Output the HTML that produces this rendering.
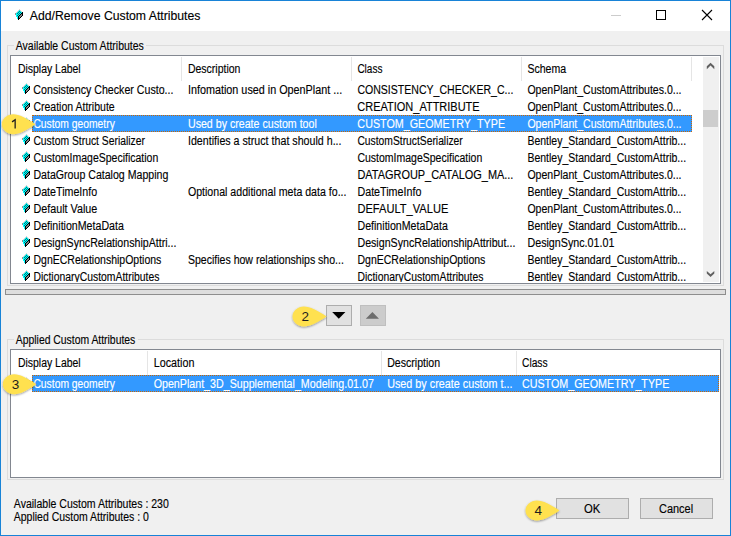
<!DOCTYPE html>
<html>
<head>
<meta charset="utf-8">
<title>Add/Remove Custom Attributes</title>
<style>
html,body{margin:0;padding:0;}
body{width:731px;height:536px;overflow:hidden;background:#f0f0f0;font-family:"Liberation Sans",sans-serif;position:relative;}
.abs,.t,.ic{position:absolute;}
.t{white-space:pre;font-size:12.5px;line-height:12.5px;transform-origin:0 0;-webkit-text-stroke:0.14px currentColor;}
#win{left:0;top:0;width:729px;height:534px;border:1px solid #1883d7;background:#f0f0f0;}
#title{left:1px;top:1px;width:729px;height:30px;background:#fff;}
.grp{border:1px solid #dcdcdc;}
.lbl{background:#f0f0f0;}
.lv{border:1px solid #828790;background:#fff;}
.hd{background:#e5e5e5;width:1px;}
.sel{background:#3399ff;}
.btn{border:1px solid #adadad;background:#e1e1e1;}
.btnd{border:1px solid #bfbfbf;background:#cccccc;}
.px{width:1px;height:1px;background:transparent;box-shadow:5px 1px 0 #dccfcf,4px 2px 0 #dccfcf,5px 2px 0 #00ffff,6px 2px 0 #dccfcf,3px 3px 0 #dccfcf,4px 3px 0 #00ffff,5px 3px 0 #007878,6px 3px 0 #00ffff,7px 3px 0 #dccfcf,2px 4px 0 #dccfcf,3px 4px 0 #00ffff,4px 4px 0 #007878,5px 4px 0 #00ffff,6px 4px 0 #007878,7px 4px 0 #00ffff,8px 4px 0 #000,1px 5px 0 #989090,2px 5px 0 #00ffff,3px 5px 0 #007878,4px 5px 0 #00ffff,5px 5px 0 #007878,6px 5px 0 #00ffff,7px 5px 0 #000,8px 5px 0 #000,1px 6px 0 #989090,2px 6px 0 #00ffff,3px 6px 0 #00ffff,4px 6px 0 #007878,5px 6px 0 #00ffff,6px 6px 0 #000,7px 6px 0 #808080,8px 6px 0 #000,2px 7px 0 #00ffff,3px 7px 0 #007878,4px 7px 0 #00ffff,5px 7px 0 #000,6px 7px 0 #808080,7px 7px 0 #808080,8px 7px 0 #000,2px 8px 0 #00ffff,3px 8px 0 #00ffff,4px 8px 0 #000,5px 8px 0 #808080,6px 8px 0 #808080,7px 8px 0 #000,3px 9px 0 #00ffff,4px 9px 0 #000,5px 9px 0 #808080,6px 9px 0 #000,3px 10px 0 #00ffff,4px 10px 0 #000,5px 10px 0 #000,4px 11px 0 #000;}
</style>
</head>
<body>
<div class="abs" id="win"></div>
<div class="abs" id="title"></div>

<!-- title bar controls -->
<svg class="abs" style="left:600px;top:0;width:130px;height:31px" viewBox="0 0 130 31">
  <rect x="11" y="15" width="10" height="1" fill="#cccccc"/>
  <rect x="56.5" y="10.5" width="9" height="9" fill="none" stroke="#000" stroke-width="1"/>
  <path d="M102 10 L112 20 M112 10 L102 20" stroke="#000" stroke-width="1.1" fill="none"/>
</svg>

<!-- group boxes -->
<div class="abs grp" style="left:7px;top:45px;width:715px;height:239px"></div>
<div class="abs lbl" style="left:14px;top:40px;width:132px;height:13px"></div>
<div class="abs grp" style="left:7px;top:339px;width:715px;height:139px"></div>
<div class="abs lbl" style="left:14px;top:333px;width:124px;height:13px"></div>

<!-- top list -->
<div class="abs lv" style="left:10px;top:55px;width:709px;height:227px"></div>
<div class="abs hd" style="left:181px;top:57px;height:24px"></div>
<div class="abs hd" style="left:351px;top:57px;height:24px"></div>
<div class="abs hd" style="left:521px;top:57px;height:24px"></div>
<div class="abs hd" style="left:691px;top:57px;height:24px"></div>
<div class="abs sel" style="left:32px;top:115px;width:660px;height:17px"></div>
<div class="abs" style="left:32px;top:115px;width:660px;height:17px;box-sizing:border-box;border:1px dotted #cc6600;"></div>

<!-- scrollbar -->
<div class="abs" style="left:703px;top:57px;width:16px;height:225px;background:#f0f0f0"></div>
<div class="abs" style="left:703px;top:110px;width:15px;height:17px;background:#cdcdcd"></div>
<svg class="abs" style="left:703px;top:56px;width:17px;height:227px" viewBox="0 0 17 227">
  <path d="M3.8 10.3 L7.55 6.7 L11.3 10.3 L11.3 13.2 L7.55 9.6 L3.8 13.2 Z" fill="#606060"/>
  <path d="M3.8 214.9 L7.55 218.3 L11.3 214.9 L11.3 217.6 L7.55 221 L3.8 217.6 Z" fill="#606060"/>
</svg>

<!-- splitter -->
<div class="abs" style="left:5px;top:289px;width:721px;height:6px;box-sizing:border-box;border:1px solid #8e8e8e;background:#dedede"></div>

<!-- arrow buttons -->
<div class="abs btn" style="left:326px;top:305px;width:24px;height:19px"></div>
<div class="abs btnd" style="left:360px;top:305px;width:24px;height:19px"></div>
<svg class="abs" style="left:326px;top:305px;width:60px;height:21px" viewBox="0 0 60 21">
  <path d="M6.2 7 L19.4 7 L12.8 13.8 Z" fill="#000"/>
  <path d="M39.8 13.7 L53 13.7 L46.4 7 Z" fill="#6d6d6d"/>
</svg>

<!-- bottom list -->
<div class="abs lv" style="left:10px;top:349px;width:709px;height:127px"></div>
<div class="abs hd" style="left:147px;top:351px;height:24px"></div>
<div class="abs hd" style="left:381px;top:351px;height:24px"></div>
<div class="abs hd" style="left:516px;top:351px;height:24px"></div>
<div class="abs sel" style="left:32px;top:375px;width:687px;height:17px"></div>
<div class="abs" style="left:32px;top:375px;width:687px;height:17px;box-sizing:border-box;border:1px dotted #cc6600;"></div>

<!-- buttons -->
<div class="abs btn" style="left:556px;top:498px;width:71px;height:19px"></div>
<div class="abs btn" style="left:640px;top:498px;width:71px;height:19px"></div>

<div class="ic px" style="left:14px;top:8px"></div>
<div class="ic px" style="left:21px;top:82px"></div>
<div class="ic px" style="left:21px;top:99px"></div>
<div class="ic px" style="left:21px;top:116px;opacity:0.55"></div>
<div class="ic px" style="left:21px;top:133px"></div>
<div class="ic px" style="left:21px;top:150px"></div>
<div class="ic px" style="left:21px;top:167px"></div>
<div class="ic px" style="left:21px;top:184px"></div>
<div class="ic px" style="left:21px;top:201px"></div>
<div class="ic px" style="left:21px;top:218px"></div>
<div class="ic px" style="left:21px;top:235px"></div>
<div class="ic px" style="left:21px;top:252px"></div>
<div class="ic px" style="left:21px;top:269px"></div>
<div class="ic px" style="left:21px;top:376px;opacity:0.55"></div>
<div class="abs" style="left:0;top:0;width:731px;height:282px;overflow:hidden">
<span class="t" style="left:0;top:84px;color:#000;transform:translateX(33.37px) scaleX(0.8509)">Consistency Checker Custo...</span>
<span class="t" style="left:0;top:84px;color:#000;transform:translateX(187.94px) scaleX(0.8640)">Infomation used in OpenPlant ...</span>
<span class="t" style="left:0;top:84px;color:#000;transform:translateX(357.38px) scaleX(0.8442)">CONSISTENCY_CHECKER_C...</span>
<span class="t" style="left:0;top:84px;color:#000;transform:translateX(527.38px) scaleX(0.8436)">OpenPlant_CustomAttributes.0...</span>
<span class="t" style="left:0;top:101px;color:#000;transform:translateX(33.38px) scaleX(0.8419)">Creation Attribute</span>
<span class="t" style="left:0;top:101px;color:#000;transform:translateX(357.36px) scaleX(0.8788)">CREATION_ATTRIBUTE</span>
<span class="t" style="left:0;top:101px;color:#000;transform:translateX(527.38px) scaleX(0.8436)">OpenPlant_CustomAttributes.0...</span>
<span class="t" style="left:0;top:118px;color:#fff;transform:translateX(33.39px) scaleX(0.8255)">Custom geometry</span>
<span class="t" style="left:0;top:118px;color:#fff;transform:translateX(187.95px) scaleX(0.8508)">Used by create custom tool</span>
<span class="t" style="left:0;top:118px;color:#fff;transform:translateX(357.37px) scaleX(0.8597)">CUSTOM_GEOMETRY_TYPE</span>
<span class="t" style="left:0;top:118px;color:#fff;transform:translateX(527.38px) scaleX(0.8436)">OpenPlant_CustomAttributes.0...</span>
<span class="t" style="left:0;top:135px;color:#000;transform:translateX(33.39px) scaleX(0.8276)">Custom Struct Serializer</span>
<span class="t" style="left:0;top:135px;color:#000;transform:translateX(187.95px) scaleX(0.8534)">Identifies a struct that should h...</span>
<span class="t" style="left:0;top:135px;color:#000;transform:translateX(357.39px) scaleX(0.8244)">CustomStructSerializer</span>
<span class="t" style="left:0;top:135px;color:#000;transform:translateX(527.46px) scaleX(0.8391)">Bentley_Standard_CustomAttrib...</span>
<span class="t" style="left:0;top:152px;color:#000;transform:translateX(33.38px) scaleX(0.8400)">CustomImageSpecification</span>
<span class="t" style="left:0;top:152px;color:#000;transform:translateX(357.38px) scaleX(0.8400)">CustomImageSpecification</span>
<span class="t" style="left:0;top:152px;color:#000;transform:translateX(527.46px) scaleX(0.8391)">Bentley_Standard_CustomAttrib...</span>
<span class="t" style="left:0;top:169px;color:#000;transform:translateX(33.45px) scaleX(0.8477)">DataGroup Catalog Mapping</span>
<span class="t" style="left:0;top:169px;color:#000;transform:translateX(357.43px) scaleX(0.8749)">DATAGROUP_CATALOG_MA...</span>
<span class="t" style="left:0;top:169px;color:#000;transform:translateX(527.38px) scaleX(0.8436)">OpenPlant_CustomAttributes.0...</span>
<span class="t" style="left:0;top:186px;color:#000;transform:translateX(33.45px) scaleX(0.8548)">DateTimeInfo</span>
<span class="t" style="left:0;top:186px;color:#000;transform:translateX(187.88px) scaleX(0.8486)">Optional additional meta data fo...</span>
<span class="t" style="left:0;top:186px;color:#000;transform:translateX(357.44px) scaleX(0.8575)">DateTimeInfo</span>
<span class="t" style="left:0;top:186px;color:#000;transform:translateX(527.46px) scaleX(0.8391)">Bentley_Standard_CustomAttrib...</span>
<span class="t" style="left:0;top:203px;color:#000;transform:translateX(33.44px) scaleX(0.8607)">Default Value</span>
<span class="t" style="left:0;top:203px;color:#000;transform:translateX(357.41px) scaleX(0.8883)">DEFAULT_VALUE</span>
<span class="t" style="left:0;top:203px;color:#000;transform:translateX(527.38px) scaleX(0.8436)">OpenPlant_CustomAttributes.0...</span>
<span class="t" style="left:0;top:220px;color:#000;transform:translateX(33.45px) scaleX(0.8504)">DefinitionMetaData</span>
<span class="t" style="left:0;top:220px;color:#000;transform:translateX(357.45px) scaleX(0.8504)">DefinitionMetaData</span>
<span class="t" style="left:0;top:220px;color:#000;transform:translateX(527.46px) scaleX(0.8391)">Bentley_Standard_CustomAttrib...</span>
<span class="t" style="left:0;top:237px;color:#000;transform:translateX(33.45px) scaleX(0.8506)">DesignSyncRelationshipAttri...</span>
<span class="t" style="left:0;top:237px;color:#000;transform:translateX(357.45px) scaleX(0.8512)">DesignSyncRelationshipAttribut...</span>
<span class="t" style="left:0;top:237px;color:#000;transform:translateX(527.44px) scaleX(0.8571)">DesignSync.01.01</span>
<span class="t" style="left:0;top:254px;color:#000;transform:translateX(33.46px) scaleX(0.8405)">DgnECRelationshipOptions</span>
<span class="t" style="left:0;top:254px;color:#000;transform:translateX(187.88px) scaleX(0.8442)">Specifies how relationships sho...</span>
<span class="t" style="left:0;top:254px;color:#000;transform:translateX(357.46px) scaleX(0.8405)">DgnECRelationshipOptions</span>
<span class="t" style="left:0;top:254px;color:#000;transform:translateX(527.46px) scaleX(0.8391)">Bentley_Standard_CustomAttrib...</span>
<span class="t" style="left:0;top:271px;color:#000;transform:translateX(33.47px) scaleX(0.8313)">DictionaryCustomAttributes</span>
<span class="t" style="left:0;top:271px;color:#000;transform:translateX(357.47px) scaleX(0.8313)">DictionaryCustomAttributes</span>
<span class="t" style="left:0;top:271px;color:#000;transform:translateX(527.46px) scaleX(0.8391)">Bentley_Standard_CustomAttrib...</span>
</div>
<span class="t" style="left:0;top:10px;color:#000;transform:translateX(29.80px) scaleX(0.9782)">Add/Remove Custom Attributes</span>
<span class="t" style="left:0;top:40px;color:#000;transform:translateX(15.80px) scaleX(0.8388)">Available Custom Attributes</span>
<span class="t" style="left:0;top:334px;color:#000;transform:translateX(15.80px) scaleX(0.8307)">Applied Custom Attributes</span>
<span class="t" style="left:0;top:63px;color:#000;transform:translateX(17.96px) scaleX(0.8355)">Display Label</span>
<span class="t" style="left:0;top:63px;color:#000;transform:translateX(187.96px) scaleX(0.8395)">Description</span>
<span class="t" style="left:0;top:63px;color:#000;transform:translateX(357.40px) scaleX(0.8000)">Class</span>
<span class="t" style="left:0;top:63px;color:#000;transform:translateX(527.38px) scaleX(0.8442)">Schema</span>
<span class="t" style="left:0;top:357px;color:#000;transform:translateX(17.96px) scaleX(0.8355)">Display Label</span>
<span class="t" style="left:0;top:357px;color:#000;transform:translateX(153.74px) scaleX(0.8593)">Location</span>
<span class="t" style="left:0;top:357px;color:#000;transform:translateX(387.15px) scaleX(0.8477)">Description</span>
<span class="t" style="left:0;top:357px;color:#000;transform:translateX(521.99px) scaleX(0.8198)">Class</span>
<span class="t" style="left:0;top:378px;color:#fff;transform:translateX(33.39px) scaleX(0.8265)">Custom geometry</span>
<span class="t" style="left:0;top:378px;color:#fff;transform:translateX(153.67px) scaleX(0.8541)">OpenPlant_3D_Supplemental_Modeling.01.07</span>
<span class="t" style="left:0;top:378px;color:#fff;transform:translateX(387.14px) scaleX(0.8636)">Used by create custom t...</span>
<span class="t" style="left:0;top:378px;color:#fff;transform:translateX(521.97px) scaleX(0.8580)">CUSTOM_GEOMETRY_TYPE</span>
<span class="t" style="left:0;top:498px;color:#000;transform:translateX(13.80px) scaleX(0.8431)">Available Custom Attributes : 230</span>
<span class="t" style="left:0;top:511px;color:#000;transform:translateX(13.80px) scaleX(0.8379)">Applied Custom Attributes : 0</span>
<span class="t" style="left:0;top:503px;color:#000;transform:translateX(583.95px) scaleX(0.9043)">OK</span>
<span class="t" style="left:0;top:503px;color:#000;transform:translateX(659.06px) scaleX(0.8747)">Cancel</span>
<svg class="abs" style="left:-5px;top:108px;width:49px;height:36px;overflow:visible" viewBox="0 0 49 36">
<defs><filter id="sh1" x="-30%" y="-30%" width="160%" height="180%"><feGaussianBlur in="SourceAlpha" stdDeviation="0.9"/><feOffset dx="0.3" dy="0.9"/><feComponentTransfer><feFuncA type="linear" slope="0.4"/></feComponentTransfer><feMerge><feMergeNode/><feMergeNode in="SourceGraphic"/></feMerge></filter></defs>
<path d="M40.45 16.20 C31.45 10.26 24.25 6.20 18.25 6.20 C12.05 6.20 6.85 10.70 6.85 16.20 C6.85 21.70 12.05 26.20 18.25 26.20 C24.25 26.20 31.45 22.14 40.45 16.20 Z" fill="#ffe14f" filter="url(#sh1)"/>
<path d="M17.05 13.90 L20.15 11.80 L20.15 20.40" stroke="#1e1e1e" stroke-width="1.3" fill="none" stroke-linejoin="miter"/>
</svg>
<svg class="abs" style="left:286px;top:300px;width:50px;height:36px;overflow:visible" viewBox="0 0 50 36">
<defs><filter id="sh2" x="-30%" y="-30%" width="160%" height="180%"><feGaussianBlur in="SourceAlpha" stdDeviation="0.9"/><feOffset dx="0.3" dy="0.9"/><feComponentTransfer><feFuncA type="linear" slope="0.4"/></feComponentTransfer><feMerge><feMergeNode/><feMergeNode in="SourceGraphic"/></feMerge></filter></defs>
<path d="M40.60 16.40 C31.60 10.46 23.90 6.40 17.90 6.40 C11.70 6.40 6.50 10.90 6.50 16.40 C6.50 21.90 11.70 26.40 17.90 26.40 C23.90 26.40 31.60 22.34 40.60 16.40 Z" fill="#ffe14f" filter="url(#sh2)"/>
<text x="19.20" y="20.80" font-family="Liberation Sans, sans-serif" font-size="13.5" fill="#1e1e1e" text-anchor="middle">2</text>
</svg>
<svg class="abs" style="left:-4px;top:368px;width:49px;height:36px;overflow:visible" viewBox="0 0 49 36">
<defs><filter id="sh3" x="-30%" y="-30%" width="160%" height="180%"><feGaussianBlur in="SourceAlpha" stdDeviation="0.9"/><feOffset dx="0.3" dy="0.9"/><feComponentTransfer><feFuncA type="linear" slope="0.4"/></feComponentTransfer><feMerge><feMergeNode/><feMergeNode in="SourceGraphic"/></feMerge></filter></defs>
<path d="M40.30 16.20 C31.30 10.26 24.20 6.20 18.20 6.20 C12.00 6.20 6.80 10.70 6.80 16.20 C6.80 21.70 12.00 26.20 18.20 26.20 C24.20 26.20 31.30 22.14 40.30 16.20 Z" fill="#ffe14f" filter="url(#sh3)"/>
<text x="19.50" y="20.60" font-family="Liberation Sans, sans-serif" font-size="13.5" fill="#1e1e1e" text-anchor="middle">3</text>
</svg>
<svg class="abs" style="left:519px;top:494px;width:50px;height:36px;overflow:visible" viewBox="0 0 50 36">
<defs><filter id="sh4" x="-30%" y="-30%" width="160%" height="180%"><feGaussianBlur in="SourceAlpha" stdDeviation="0.9"/><feOffset dx="0.3" dy="0.9"/><feComponentTransfer><feFuncA type="linear" slope="0.4"/></feComponentTransfer><feMerge><feMergeNode/><feMergeNode in="SourceGraphic"/></feMerge></filter></defs>
<path d="M40.50 16.40 C31.50 10.46 23.90 6.40 17.90 6.40 C11.70 6.40 6.50 10.90 6.50 16.40 C6.50 21.90 11.70 26.40 17.90 26.40 C23.90 26.40 31.50 22.34 40.50 16.40 Z" fill="#ffe14f" filter="url(#sh4)"/>
<text x="19.20" y="20.80" font-family="Liberation Sans, sans-serif" font-size="13.5" fill="#1e1e1e" text-anchor="middle">4</text>
</svg>
</body>
</html>
